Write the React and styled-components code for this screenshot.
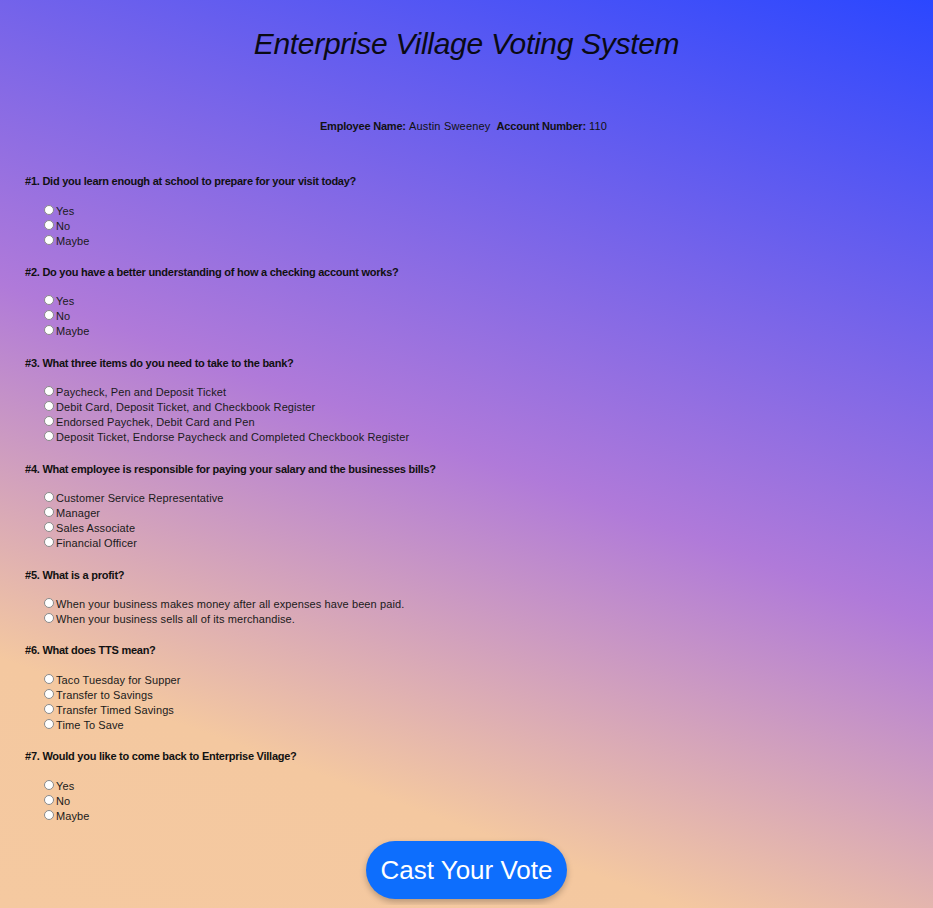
import React from 'react';
import styled, { createGlobalStyle } from 'styled-components';

const GlobalStyle = createGlobalStyle`
  html {
    min-height: 100%;
    background: linear-gradient(20deg, #f5c9a0 0%, #f4c8a0 20%, #b07ad9 50%, #2b47ff 100%);
  }
  body {
    margin: 0;
    font-family: "Liberation Sans", Arial, sans-serif;
    color: #111;
  }
`;

const Page = styled.main`
  display: flex;
  flex-direction: column;
  padding: 0 25px 6px;
`;

const Title = styled.h1`
  margin: 27px 0 0;
  text-align: center;
  font-size: 30px;
  font-weight: normal;
  font-style: italic;
  letter-spacing: -0.3px;
  color: #0a0a14;
`;

const Employee = styled.div`
  margin-top: 59px;
  text-align: center;
  font-size: 11px;
  > b {
    font-weight: bold;
    letter-spacing: -0.2px;
  }
  > span {
    margin-right: 6px;
    letter-spacing: 0.2px;
  }
`;

const Form = styled.form`
  display: flex;
  flex-direction: column;
  margin-top: 43px;
  gap: 17.9px;
`;

const Question = styled.fieldset`
  border: 0;
  margin: 0;
  padding: 0;
  display: flex;
  flex-direction: column;
`;

const Prompt = styled.legend`
  padding: 0;
  font-size: 11px;
  font-weight: bold;
  letter-spacing: -0.25px;
  margin-bottom: 16px;
`;

const Options = styled.div`
  display: flex;
  flex-direction: column;
  padding-left: 19px;
`;

const Option = styled.label`
  display: flex;
  align-items: center;
  height: 15px;
  font-size: 11px;
  letter-spacing: 0.1px;
  color: #1a1a1a;
`;

const Radio = styled.input.attrs({ type: 'radio' })`
  appearance: none;
  width: 10px;
  height: 10px;
  margin: 0 2px 2px 0;
  border-radius: 50%;
  background: #fff;
  border: 1px solid #8a8a8a;
  flex-shrink: 0;
`;

const Submit = styled.button`
  align-self: center;
  margin-top: 0;
  width: 201px;
  height: 58px;
  border: 0;
  border-radius: 29px;
  background: #0d6efd;
  color: #fff;
  font-family: Arial, "Liberation Sans", sans-serif;
  font-size: 26px;
  box-shadow: 0 3px 6px rgba(0, 0, 0, 0.25);
  cursor: pointer;
`;

const questions = [
  {
    text: 'Did you learn enough at school to prepare for your visit today?',
    options: ['Yes', 'No', 'Maybe'],
  },
  {
    text: 'Do you have a better understanding of how a checking account works?',
    options: ['Yes', 'No', 'Maybe'],
  },
  {
    text: 'What three items do you need to take to the bank?',
    options: [
      'Paycheck, Pen and Deposit Ticket',
      'Debit Card, Deposit Ticket, and Checkbook Register',
      'Endorsed Paychek, Debit Card and Pen',
      'Deposit Ticket, Endorse Paycheck and Completed Checkbook Register',
    ],
  },
  {
    text: 'What employee is responsible for paying your salary and the businesses bills?',
    options: [
      'Customer Service Representative',
      'Manager',
      'Sales Associate',
      'Financial Officer',
    ],
  },
  {
    text: 'What is a profit?',
    options: [
      'When your business makes money after all expenses have been paid.',
      'When your business sells all of its merchandise.',
    ],
  },
  {
    text: 'What does TTS mean?',
    options: [
      'Taco Tuesday for Supper',
      'Transfer to Savings',
      'Transfer Timed Savings',
      'Time To Save',
    ],
  },
  {
    text: 'Would you like to come back to Enterprise Village?',
    options: ['Yes', 'No', 'Maybe'],
  },
];

const App = () => {
  return (
    <>
      <GlobalStyle />
      <Page>
        <Title>Enterprise Village Voting System</Title>
        <Employee>
          <b>Employee Name:</b> <span>Austin Sweeney</span>
          <b>Account Number:</b> <span>110</span>
        </Employee>
        <Form onSubmit={(e) => e.preventDefault()}>
          {questions.map((q, i) => (
            <Question key={i}>
              <Prompt>
                #{i + 1}. {q.text}
              </Prompt>
              <Options>
                {q.options.map((opt) => (
                  <Option key={opt}>
                    <Radio name={`q${i + 1}`} value={opt} />
                    {opt}
                  </Option>
                ))}
              </Options>
            </Question>
          ))}
          <Submit type="submit">Cast Your Vote</Submit>
        </Form>
      </Page>
    </>
  );
};

export default App;
